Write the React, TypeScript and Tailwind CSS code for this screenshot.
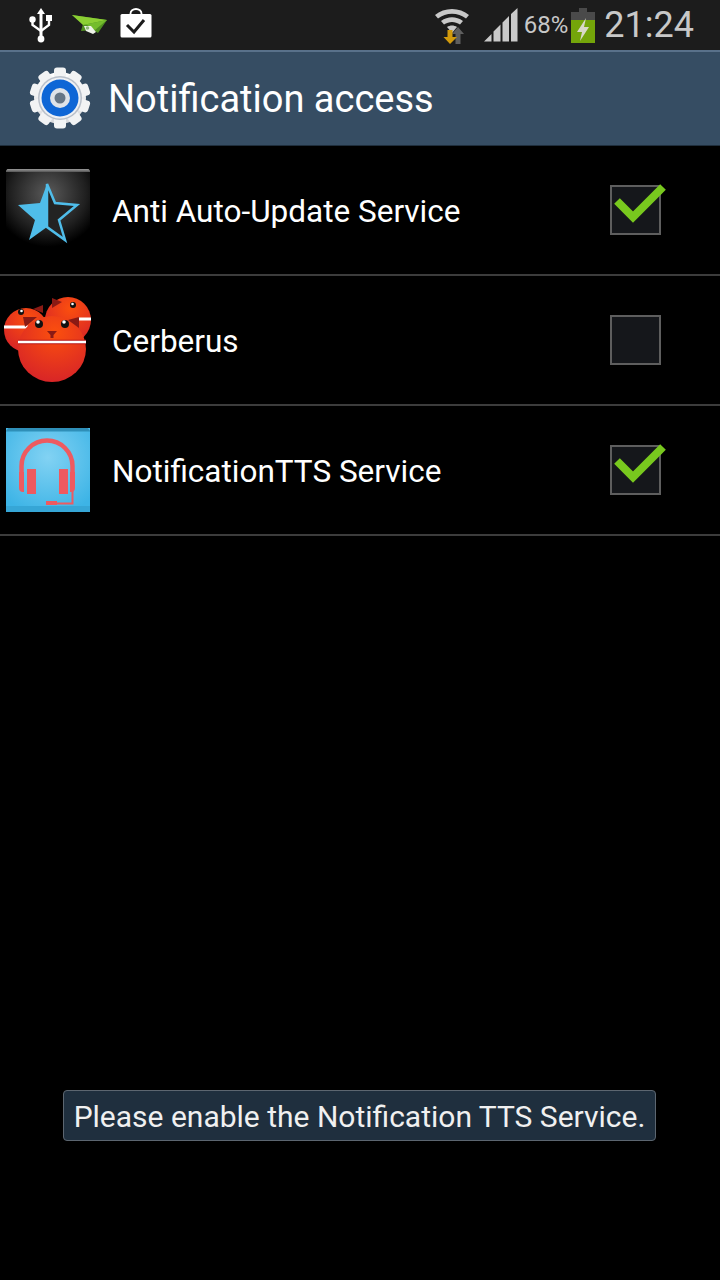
import React from "react";

const UsbIcon = () => (
  <svg width="24" height="36" viewBox="0 0 24 36" className="ml-[29px]">
    <path d="M12 1l4 6h-8z" fill="#fff" />
    <path d="M12 6v26" stroke="#fff" strokeWidth="3" fill="none" />
    <path d="M3.5 13v5l8.5 6 8-6v-5" stroke="#fff" strokeWidth="2.4" fill="none" />
    <circle cx="3.5" cy="12.5" r="3.2" fill="#fff" />
    <rect x="17" y="8" width="6" height="6" fill="#fff" />
    <circle cx="12" cy="32" r="3.4" fill="#fff" />
  </svg>
);

const PlaneIcon = () => (
  <svg width="37" height="28" viewBox="0 0 37 28" className="ml-[18px]">
    <path d="M1 4L36 9 27 22 22 19 10 20 12 13z" fill="#4f8f20" />
    <path d="M1 4L36 9 12 14z" fill="#8ccf34" />
    <path d="M12 14L36 9 24 19 16 14z" fill="#74bd2c" />
    <path d="M13 15l7 0 5 6-3 2-7-3z" fill="#eef3e8" />
    <circle cx="16.500" cy="17" r="1.800" fill="#8fb77a" />
  </svg>
);

const BagIcon = () => (
  <svg width="32" height="34" viewBox="0 0 32 34" className="ml-[12px]">
    <path d="M10.500 7V5.500a5.500 4.500 0 0 1 11 0V7" stroke="#fff" strokeWidth="1.800" fill="none" />
    <rect x="0.500" y="6" width="31" height="23.500" rx="1.500" fill="#fff" />
    <path d="M7 17l7 7 10-12" stroke="#1c1c1c" strokeWidth="3" fill="none" />
  </svg>
);

const WifiIcon = () => (
  <svg width="36" height="38" viewBox="0 0 36 38">
    <path d="M1 9C10 1 26 1 35 9l-3 3.500C24 6 12 6 4 12.500z" fill="#c8c8c8" />
    <path d="M7 15c7-5 15-5 22 0l-3 3.500c-5-3.500-11-3.500-16 0z" fill="#c8c8c8" />
    <path d="M13 21c3-2 7-2 10 0l-5 6z" fill="#c8c8c8" />
    <path d="M24 21l6 7h-3.500v10h-5V28H18z" fill="#5f5f5f" />
    <path d="M13.500 24h5v7H23l-7 7-6.500-7h4z" fill="#d29a0c" />
  </svg>
);

const SignalIcon = () => (
  <svg width="34" height="34" viewBox="0 0 34 34" className="ml-[14px]">
    <path d="M0 33.500L7.500 26v7.500zM9.500 33.500V23.500l7-7v17zM18.500 33.500V14.500l6.500-6.500v25.500zM27 33.500V6l6.500-6v33.500z" fill="#c9c9c9" />
  </svg>
);

const BatteryIcon = () => (
  <svg width="24" height="36" viewBox="0 0 24 36" className="ml-[3px]">
    <rect x="8" y="1" width="8" height="4" fill="#4a4a4a" />
    <rect x="0" y="5" width="24" height="8" fill="#4a4a4a" />
    <rect x="0" y="13" width="24" height="23" fill="#74a50a" />
    <path d="M15 11L6 25h5l-2 9 9-14h-5z" fill="#d8d8c8" />
  </svg>
);

const GearIcon = () => (
  <svg width="62" height="62" viewBox="0 0 62 62" className="ml-[29px] mb-[2px] shrink-0">
    <defs>
      <linearGradient id="gearFill" x1="0" y1="0" x2="0" y2="1">
        <stop offset="0" stopColor="#ffffff" />
        <stop offset="1" stopColor="#d8d9dc" />
      </linearGradient>
    </defs>
    <g fill="url(#gearFill)">
      <circle cx="31" cy="31" r="26" />
    </g>
    <g fill="#f2f3f4">
      <rect x="25" y="0.500" width="12" height="61" rx="3" />
      <rect x="25" y="0.500" width="12" height="61" rx="3" transform="rotate(36 31 31)" />
      <rect x="25" y="0.500" width="12" height="61" rx="3" transform="rotate(72 31 31)" />
      <rect x="25" y="0.500" width="12" height="61" rx="3" transform="rotate(108 31 31)" />
      <rect x="25" y="0.500" width="12" height="61" rx="3" transform="rotate(144 31 31)" />
    </g>
    <circle cx="31" cy="31" r="22" fill="#b9c0ca" />
    <circle cx="31" cy="31" r="20.500" fill="#eef0f4" />
    <circle cx="31" cy="31" r="18.500" fill="#0e66d6" />
    <circle cx="31" cy="31" r="10" fill="#dfe3e8" />
    <circle cx="31" cy="31" r="5.500" fill="#667686" />
  </svg>
);

const StarAppIcon = () => (
  <svg width="84" height="82" viewBox="0 0 84 82">
    <defs>
      <radialGradient id="starBg" cx="0.5" cy="0.3" r="0.65">
        <stop offset="0" stopColor="#5a5a5a" />
        <stop offset="0.7" stopColor="#1f1f1f" />
        <stop offset="1" stopColor="#000000" />
      </radialGradient>
      <linearGradient id="starTop" x1="0" y1="0" x2="0" y2="1">
        <stop offset="0" stopColor="#9a9a9a" />
        <stop offset="1" stopColor="#555555" />
      </linearGradient>
    </defs>
    <path d="M1.500 0H82.500L84 1.500V82H0V1.500z" fill="url(#starBg)" />
    <path d="M1.500 0H82.500L84 1.500V3H0V1.500z" fill="url(#starTop)" />
    <path d="M41 15L49 34 71 36 53 51 59 71 41 58z" fill="#232323" stroke="#4fbdea" strokeWidth="2.500" />
    <path d="M41 15L34 34 12 36 29 51 23 71 41 58z" fill="#4fbdea" />
  </svg>
);

const CerberusIcon = () => (
  <svg width="92" height="88" viewBox="0 0 92 88">
    <defs>
      <radialGradient id="birdFill" cx="0.55" cy="0.25" r="0.85">
        <stop offset="0" stopColor="#fb4f0e" />
        <stop offset="1" stopColor="#d4202a" />
      </radialGradient>
    </defs>
    {/* left head */}
    <circle cx="25" cy="34" r="22" fill="url(#birdFill)" />
    <path d="M3 31h24" stroke="#fff" strokeWidth="3" />
    <path d="M42 9L32 13 42 17z" fill="#8a1a14" />
    <circle cx="20" cy="16" r="3" fill="#111" />
    <circle cx="20.500" cy="15" r="1.300" fill="#fff" />
    {/* right head */}
    <circle cx="67" cy="24" r="23" fill="url(#birdFill)" />
    <path d="M77 23h13" stroke="#fff" strokeWidth="3" />
    <path d="M51 2L61 6 51 12z" fill="#8a1a14" />
    <circle cx="72" cy="9" r="3" fill="#111" />
    <circle cx="71.500" cy="8" r="1.300" fill="#fff" />
    {/* front head */}
    <ellipse cx="51" cy="53" rx="34" ry="33" fill="url(#birdFill)" />
    <path d="M22 21L36 21 24 31zM78 21L67 24 78 32z" fill="#8a1a14" />
    <path d="M17 46h68" stroke="#b81818" strokeWidth="4.500" />
    <path d="M17 46h68" stroke="#fff" strokeWidth="2.500" />
    <circle cx="38" cy="28" r="4" fill="#111" />
    <circle cx="37" cy="26" r="1.800" fill="#fff" />
    <circle cx="64" cy="28" r="4" fill="#111" />
    <circle cx="63" cy="26" r="1.800" fill="#fff" />
    <path d="M46 35h10l-3.500 4v3h-3v-3z" fill="#8a1a14" />
  </svg>
);

const HeadsetIcon = () => (
  <svg width="84" height="84" viewBox="0 0 84 84">
    <defs>
      <radialGradient id="ttsBg" cx="0.5" cy="0.35" r="0.7">
        <stop offset="0" stopColor="#82d2f3" />
        <stop offset="1" stopColor="#3db4e6" />
      </radialGradient>
    </defs>
    <rect width="84" height="84" fill="url(#ttsBg)" />
    <path d="M2.500 0H81.500L84 2.500V3.500H0V2.500z" fill="#2f8fb8" />
    <rect y="78" width="84" height="6" fill="#36a6d6" />
    <path d="M15.500 55V38a25.500 25.500 0 0 1 51 0V55" stroke="#ee5a60" strokeWidth="4.500" fill="none" />
    <rect x="21" y="41" width="9" height="25" fill="#ee5a60" />
    <rect x="53" y="41" width="9" height="25" fill="#ee5a60" />
    <path d="M13 44h5v20h-1a4 4 0 0 1-4-4zM69 44h-5v20h1a4 4 0 0 0 4-4z" fill="#ee5a60" />
    <path d="M66.500 62v13.500H40" stroke="#ee5a60" strokeWidth="2" fill="none" />
    <rect x="40" y="73" width="11" height="4" fill="#ee5a60" />
  </svg>
);

const Checkbox = ({ checked }: { checked: boolean }) => (
  <div className="relative w-[51px] h-[50px] mr-[59px] border-2 border-[#5e5e5e] bg-[#15171b] shrink-0">
    {checked && (
      <svg width="56" height="50" viewBox="0 0 56 50" className="absolute left-[1px] top-[-13px]">
        <path d="M4 27l16 16L50 13" stroke="#78c81e" strokeWidth="8" fill="none" />
      </svg>
    )}
  </div>
);

const rows = [
  { label: "Anti Auto-Update Service", checked: true, icon: <StarAppIcon />, pad: "pl-[6px] w-[112px]" },
  { label: "Cerberus", checked: false, icon: <CerberusIcon />, pad: "pl-[1px] w-[112px]" },
  { label: "NotificationTTS Service", checked: true, icon: <HeadsetIcon />, pad: "pl-[6px] w-[112px]" },
];

export default function App() {
  return (
    <div className="relative w-[720px] h-[1280px] bg-black overflow-hidden font-['Roboto',sans-serif] text-white">
      {/* Status bar */}
      <div className="h-[50px] bg-[#1c1c1c] flex items-center">
        <UsbIcon />
        <PlaneIcon />
        <BagIcon />
        <div className="ml-auto flex items-center pr-[26px]">
          <WifiIcon />
          <SignalIcon />
          <span className="ml-[6px] text-[24px] text-[#c8c8c8] leading-none">68%</span>
          <BatteryIcon />
          <span className="ml-[9px] text-[36px] text-[#c8c8c8] leading-none">21:24</span>
        </div>
      </div>

      {/* Action bar */}
      <div className="h-[96px] bg-[#364d63] border-t-2 border-t-[#59718a] border-b border-b-[#1f2e3c] flex items-center">
        <GearIcon />
        <h1 className="ml-[17px] text-[38px] font-normal leading-none">Notification access</h1>
      </div>

      {/* List */}
      <div>
        {rows.map((row) => (
          <div key={row.label} className="h-[130px] border-b-2 border-[#3c3c3c] flex items-center">
            <div className={`${row.pad} shrink-0`}>{row.icon}</div>
            <span className="flex-1 pt-[4px] text-[31.5px] leading-none">{row.label}</span>
            <Checkbox checked={row.checked} />
          </div>
        ))}
      </div>

      {/* Toast */}
      <div className="absolute left-[63px] top-[1090px] w-[593px] h-[51px] pt-[2px] rounded-[4px] border border-[#5c6670] bg-[#1f2f3e] flex items-center justify-center text-[30px] text-[#f0f0f0] leading-none whitespace-nowrap">
        Please enable the Notification TTS Service.
      </div>
    </div>
  );
}
